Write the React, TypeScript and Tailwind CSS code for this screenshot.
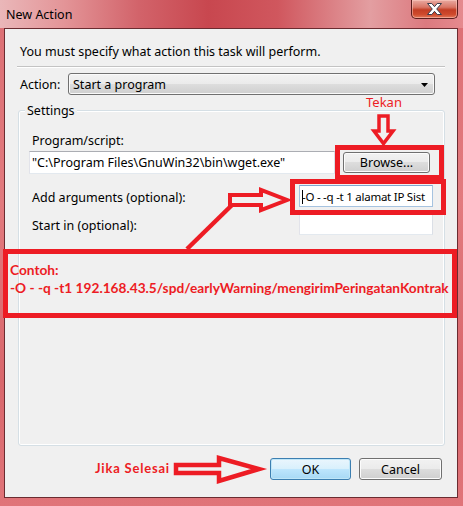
import React from 'react';

const ui = "font-['Segoe_UI','Noto_Sans',sans-serif] text-[12.5px] leading-[16px] text-black";

const CloseGlyph: React.FC = () => (
  <svg width="17" height="12" viewBox="0 0 17 12">
    <path
      d="M1.5 0.5h4.3l2.7 3.2 2.7-3.2h4.3l-4.8 5.5 4.8 5.5h-4.3l-2.7-3.2-2.7 3.2h-4.3l4.8-5.5z"
      fill="#ffffff"
      stroke="#3c3c4a"
      strokeWidth="1"
      strokeLinejoin="round"
    />
  </svg>
);

const WinButton: React.FC<{ label: string; primary?: boolean; className?: string }> = ({
  label,
  primary,
  className = '',
}) => (
  <div
    className={`${className} flex items-center justify-center rounded-[3px] border pt-[1px] ${
      primary
        ? 'border-[#3c7fb1] shadow-[inset_0_0_0_1px_#bfe6f8] bg-[linear-gradient(to_bottom,#eaf6fd_0%,#d9f0fc_48%,#bee6fd_50%,#a7d9f5_100%)]'
        : 'border-[#707070] shadow-[inset_0_0_0_1px_#fcfcfc] bg-[linear-gradient(to_bottom,#f2f2f2_0%,#ebebeb_48%,#dddddd_50%,#cfcfcf_100%)]'
    }`}
  >
    {label}
  </div>
);

const TextBox: React.FC<{ className?: string; children?: React.ReactNode; focused?: boolean }> = ({
  className = '',
  children,
  focused,
}) => (
  <div
    className={`${className} bg-white border whitespace-nowrap flex items-center pt-[1px] ${
      focused
        ? 'border-[#a6c3e0] border-t-[#7fa6cf]'
        : 'border-[#e3e9ef] border-t-[#abadb3] border-l-[#e2e3ea] border-r-[#dbdfe6]'
    }`}
  >
    {children}
  </div>
);

export default function App() {
  return (
    <div className="relative w-[463px] h-[506px] overflow-hidden bg-[linear-gradient(to_bottom,#dc6f74_0%,#e27a7e_40%,#d9676c_75%,#e07479_100%)]">
      {/* title bar */}
      <div className="flex h-[28px] items-start bg-[linear-gradient(to_right,#eab7b9_0%,#e39497_14%,#d2636a_30%,#c8474f_45%,#d0575e_60%,#e39ea1_80%,#dc7a7f_92%,#e58a8e_100%)]">
        <div className={`${ui} pl-[6px] pt-[7px] text-[#1e1e1e]`}>New Action</div>
        <div className="ml-auto mr-[5px] flex h-[19px] w-[47px] items-center justify-center rounded-b-[5px] border border-t-0 border-[#5a1d1d] bg-[linear-gradient(to_bottom,#e9aaa2_0%,#d97565_40%,#c33d24_55%,#cf4a2c_80%,#e3785a_100%)] shadow-[inset_0_0_0_1px_rgba(255,210,200,0.5)]">
          <CloseGlyph />
        </div>
      </div>

      {/* client area */}
      <div className={`${ui} ml-[4px] h-[470px] w-[454px] border border-[#6b2c31] bg-[#f0f0f0] pl-[12px] pr-[12px] pt-[15px]`}>
        <div className="ml-[3px]">You must specify what action this task will perform.</div>
        <div className="mt-[6px] h-[2px] border-t border-[#c3c3c3] border-b border-b-white" />

        <div className="mt-[5px] flex items-center">
          <div className="ml-[3px] w-[48px] pt-[2px]">Action:</div>
          <div className="relative flex h-[22px] w-[367px] items-center rounded-[3px] border border-[#707070] bg-[linear-gradient(to_bottom,#f2f2f2_0%,#ebebeb_48%,#dddddd_50%,#cfcfcf_100%)] pl-[4px] pt-[1px] shadow-[inset_0_0_0_1px_#fafafa]">
            Start a program
            <svg className="ml-auto mr-[6px]" width="7" height="4" viewBox="0 0 7 4">
              <path d="M0 0h7L3.5 4z" fill="#000" />
            </svg>
          </div>
        </div>

        {/* Settings group */}
        <div className="relative mt-[15px] ml-[1px] h-[336px] w-[427px] rounded-[3px] border border-[#d5dfe5] pl-[10px] pr-[11px] pt-[22px] shadow-[inset_0_0_0_1px_#ffffff]">
          <span className="absolute -top-[8px] left-[6px] bg-[#f0f0f0] px-[2px]">Settings</span>
          <div className="ml-[3px]">Program/script:</div>
          <div className="mt-[2px] flex items-center">
            <TextBox className="h-[23px] w-[306px] pl-[2px]">"C:\Program Files\GnuWin32\bin\wget.exe"</TextBox>
            <WinButton label="Browse..." className="ml-[8px] h-[21px] w-[87px]" />
          </div>
          <div className="mt-[11px] flex items-center">
            <div className="ml-[3px] pt-[3px]">Add arguments (optional):</div>
            <TextBox focused className="ml-auto h-[22px] w-[134px] pl-[2px] text-[11.5px] tracking-[-0.25px]">
              <span className="mr-[-1px] inline-block h-[14px] w-[1px] bg-black" />
              -O - -q -t 1 alamat IP Sist
            </TextBox>
          </div>
          <div className="mt-[6px] flex items-center">
            <div className="ml-[3px] pt-[3px]">Start in (optional):</div>
            <TextBox className="ml-auto h-[22px] w-[134px]" />
          </div>
        </div>

        <div className="mt-[12px] flex justify-end pr-[3px]">
          <WinButton label="OK" primary className="h-[22px] w-[81px]" />
          <WinButton label="Cancel" className="ml-[8px] h-[22px] w-[83px]" />
        </div>
      </div>

      {/* red annotations drawn over the dialog */}
      <svg className="pointer-events-none absolute left-0 top-0" width="463" height="506" viewBox="0 0 463 506">
        <g fill="none" stroke="#ed1c24">
          <rect x="337.5" y="147.5" width="104" height="30" strokeWidth="5" />
          <rect x="292.5" y="181.5" width="151" height="31" strokeWidth="5" />
          <rect x="5.5" y="251.5" width="449" height="64" strokeWidth="5" />
          <path d="M379 116h9v15h5l-9.5 12.5L374 131h5z" strokeWidth="3.5" />
          <path d="M230 195h31v-5l26 10-26 10v-5h-31z" strokeWidth="4" />
          <path d="M187 249L232 205" strokeWidth="4.5" />
          <path d="M176 465h43v-7l40 11-40 12v-8h-43z" strokeWidth="4.5" />
        </g>
      </svg>
      <div className="absolute left-[366px] top-[94px] font-['Segoe_UI','Noto_Sans',sans-serif] text-[13px] leading-[16px] text-[#ed1c24]">
        Tekan
      </div>
      <div className="absolute left-[10px] top-[261px] font-['Lato',sans-serif] text-[13.7px] font-bold leading-[18px] text-[#ed1c24]">
        <div>Contoh:</div>
        <div>-O - -q -t1 192.168.43.5/spd/earlyWarning/mengirimPeringatanKontrak</div>
      </div>
      <div className="absolute left-[95px] top-[459px] font-['Lato',sans-serif] text-[13px] font-bold leading-[18px] tracking-[0.8px] text-[#ed1c24]">
        Jika Selesai
      </div>
    </div>
  );
}
